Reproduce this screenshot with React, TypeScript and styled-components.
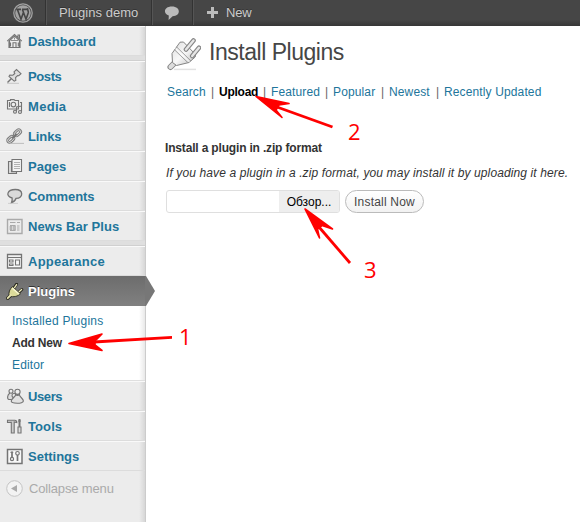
import React from 'react';
import styled, { createGlobalStyle } from 'styled-components';

const Global = createGlobalStyle`
  * { box-sizing: border-box; }
  body { margin: 0; background: #fff; font-family: "Liberation Sans", Arial, sans-serif; overflow: hidden; }
`;

const Page = styled.div`
  position: relative;
  width: 580px;
  height: 522px;
  overflow: hidden;
  display: flex;
  flex-direction: column;
`;

const AdminBar = styled.header`
  height: 26px;
  flex: none;
  display: flex;
  background: linear-gradient(#464646 0 20px, #373737 26px);
  color: #ccc;
`;

const BarItem = styled.div<{ $w: number; $pad: number; $last?: boolean }>`
  width: ${p => p.$w}px;
  height: 25px;
  padding-left: ${p => p.$pad}px;
  display: flex;
  align-items: center;
  gap: 8px;
  white-space: nowrap;
  border-right: ${p => (p.$last ? 0 : 1)}px solid #333;
  box-shadow: ${p => (p.$last ? 'none' : '1px 0 0 #555')};
`;

const BarText = styled.span<{ $ls: number }>`
  font-size: 13px;
  line-height: 26px;
  letter-spacing: ${p => p.$ls}px;
  text-shadow: 0 -1px 0 #333;
`;

const Columns = styled.div`
  flex: 1;
  display: flex;
`;

const Sidebar = styled.nav`
  width: 146px;
  flex: none;
  background: linear-gradient(to right, transparent 139px, rgba(0, 0, 0, 0.09) 145px), #ececec;
  border-right: 1px solid #ccc;
`;

const MenuRow = styled.a<{ $active?: boolean }>`
  position: relative;
  height: 30px;
  display: flex;
  align-items: center;
  padding-left: 6px;
  border-top: 1px solid ${p => (p.$active ? '#6d6d6d' : '#f9f9f9')};
  border-bottom: 1px solid ${p => (p.$active ? '#808080' : '#dcdcdc')};
  background: ${p => (p.$active ? 'linear-gradient(#6d6d6d, #808080)' : 'transparent')};
  color: ${p => (p.$active ? '#fff' : '#21759b')};
  text-shadow: ${p => (p.$active ? '0 -1px 0 #333' : 'none')};
`;

const MenuText = styled.span<{ $ls?: number }>`
  font-size: 13px;
  font-weight: bold;
  letter-spacing: ${p => p.$ls ?? 0}px;
  white-space: nowrap;
  padding-left: 4px;
`;

const ActivePointer = styled.svg`
  position: absolute;
  left: 145px;
  top: -1px;
`;

const Separator = styled.div`
  height: 5px;
  background: #dfdfdf;
  border-bottom: 1px solid #d0d0d0;
`;

const Submenu = styled.div`
  height: 75px;
  padding: 4px 0 0 12px;
  border-bottom: 1px solid #dfdfdf;
  background: linear-gradient(to right, transparent 139px, rgba(0, 0, 0, 0.09) 145px), #fff;
`;

const SubItem = styled.a<{ $current?: boolean; $ls?: number }>`
  display: block;
  font-size: 12px;
  line-height: 22px;
  letter-spacing: ${p => p.$ls ?? 0}px;
  font-weight: ${p => (p.$current ? 'bold' : 'normal')};
  color: ${p => (p.$current ? '#333' : '#21759b')};
`;

const Collapse = styled.div`
  height: 34px;
  display: flex;
  align-items: center;
  gap: 6px;
  padding-left: 6px;
  color: #aaa;
  font-size: 13px;
  letter-spacing: -0.15px;
`;

const Main = styled.main`
  flex: 1;
  padding-left: 19px;
  color: #333;
`;

const TitleRow = styled.div`
  display: flex;
  align-items: center;
  height: 55px;
  gap: 7px;
`;

const Title = styled.h1`
  margin: -3px 0 0 1px;
  font-size: 23px;
  font-weight: normal;
  color: #464646;
  letter-spacing: -0.47px;
`;

const Filters = styled.div`
  display: flex;
  padding-left: 2px;
  height: 22px;
  font-size: 12px;
  line-height: 22px;
  white-space: pre;
`;

const FilterLink = styled.a<{ $current?: boolean; $w: number }>`
  width: ${p => p.$w}px;
  color: ${p => (p.$current ? '#000' : '#21759b')};
  font-weight: ${p => (p.$current ? 'bold' : 'normal')};
  letter-spacing: ${p => (p.$current ? -0.25 : 0.13)}px;
`;

const Bar = styled.span`
  width: 13px;
  text-align: center;
  color: #666;
`;

const Heading = styled.h4`
  margin: 36px 0 0;
  height: 18px;
  line-height: 18px;
  font-size: 12px;
  letter-spacing: -0.17px;
`;

const Hint = styled.p`
  margin: 7px 0 0 1px;
  height: 18px;
  line-height: 18px;
  font-size: 12px;
  font-style: italic;
  letter-spacing: 0.118px;
  white-space: nowrap;
`;

const FormRow = styled.div`
  display: flex;
  gap: 5px;
  margin: 8px 0 0 1px;
`;

const FileField = styled.div`
  width: 174px;
  height: 23px;
  display: flex;
  justify-content: flex-end;
  border: 1px solid #dfdfdf;
  border-radius: 3px;
  overflow: hidden;
`;

const Browse = styled.span`
  width: 60px;
  background: #eee;
  color: #000;
  font-size: 12px;
  line-height: 22px;
  text-align: center;
`;

const InstallButton = styled.button`
  width: 79px;
  height: 23px;
  padding: 0;
  border: 1px solid #bbb;
  border-radius: 12px;
  background: linear-gradient(#fff, #f2f2f2);
  color: #464646;
  font: 12px "Liberation Sans", Arial, sans-serif;
  letter-spacing: 0.2px;
`;

const Annotations = styled.svg`
  position: absolute;
  left: 0;
  top: 0;
`;

const WpLogo = () => (
  <svg width="20" height="20" viewBox="0 0 20 20">
    <circle cx="10" cy="10" r="9.2" fill="none" stroke="#a2a2a2" strokeWidth="1.3" />
    <circle cx="10" cy="10" r="7.8" fill="#a2a2a2" />
    <path d="M3.2 6.4H8M9 6.4h5M4.4 6.5 8 16.2 10.4 9.4M9.4 6.5 13 16.2 15.2 10C15.8 8 14.2 7 14.6 5.2" fill="none" stroke="#454545" strokeWidth="1.6" />
  </svg>
);

type IconName = 'home' | 'pin' | 'media' | 'link' | 'pages' | 'comment' | 'news' | 'appearance' | 'plug' | 'users' | 'tools' | 'settings';

const shapes: Record<IconName, React.ReactNode> = {
  home: <><path d="M3 8v6.5h11V8L8.5 3z" fill="#eee" /><path d="M1.2 8.2 8.5 1.6l7.3 6.6M3.5 8v6.5h10V8M12 4.5V2h1.5v3.5M7 14.5V9.8h3v4.7M4.5 9.5v4M12.3 9.5v4" /><path d="M5 7.5h7M8.5 4.5v2" strokeWidth=".8" /></>,
  pin: <><path d="M1.5 14.5 6 10" strokeWidth="1.4" /><path d="M8 3.8 10.5 1.5l4.5 4.2-2.2 2-1.2-.2-2 2 .2 3-1.6.7L3 8.3l.8-1.2 3 .1 2-1.7z" fill="#ddd" /><path d="M1 15.3h12" stroke="#bbb" strokeWidth=".8" /></>,
  media: <><path d="M1.5 2.5v8.5h11V2.5H9L8 1.6H4.5v.9z" fill="#eee" /><circle cx="7.4" cy="6.6" r="2.3" /><path d="M3.5 4v5M14 4.5h1.5v9M10.5 13V9l5-1" /><circle cx="9" cy="13.7" r="1.5" fill="#ddd" /><circle cx="14" cy="14" r="1.5" fill="#ddd" /></>,
  link: <><g strokeWidth="2.8" stroke="#808080"><rect x="8" y="2.7" width="7" height="4" rx="2" transform="rotate(-42 11.6 4.7)" /><rect x="1.2" y="9.3" width="7" height="4" rx="2" transform="rotate(-42 4.8 11.3)" /></g><g strokeWidth=".9" stroke="#ddd"><rect x="8" y="2.7" width="7" height="4" rx="2" transform="rotate(-42 11.6 4.7)" /><rect x="1.2" y="9.3" width="7" height="4" rx="2" transform="rotate(-42 4.8 11.3)" /></g><path d="m6 10.2 4.7-4.2" strokeWidth="2" /><path d="M4 15.4h14" stroke="#b8b8b8" strokeWidth=".9" /></>,
  pages: <><path d="M2.5 3.5h3v10.2h5v1.8h-8z" fill="#ddd" /><path d="M6 1.5h9.5v12H6z" fill="#f4f4f4" /><path d="M8 4.5h6M8 6.5h6M8 8.5h6M8 10.5h6" strokeWidth=".9" stroke="#aaa" /></>,
  comment: <><path d="M9.3 1.5c8.4 0 8.4 8.8.8 8.8-.6 2-2 3.5-4.7 4.5 1-1.8 1-3 .7-4.8C-.8 8.3 1 1.5 9.3 1.5z" fill="#dadada" strokeWidth="1.3" /><path d="M2 15.4h10" stroke="#ccc" strokeWidth=".9" /></>,
  news: <g stroke="#aaa"><path d="M1.5 1.5h14.5v14H1.5z" fill="#ececec" strokeWidth="1.4" /><path d="M4 4.5h5.5M11 4.5h3M11 8h2.5M11 10h2.5M11 12h2.5M4 7.5h5.5M4 12.5h5.5" /><path d="M4 8h2v4H4zM7.5 8h2v4h-2z" fill="#bbb" strokeWidth=".6" /></g>,
  appearance: <><path d="M1.5 1.5h14v13.5h-14z" fill="#f8f8f8" strokeWidth="1.3" /><path d="M2 4.5h13" /><path d="M9.5 7h4v5h-4zM3.5 7h3.5v2H3.5zM3.5 11h3.5v1.5H3.5z" /></>,
  plug: <g stroke="#2b2b22"><path d="m8 4.8 2.6-3.6M12.8 9.3l3-2.8" strokeWidth="3" strokeLinecap="round" /><path d="m8.4 4.8 2.2-3.2M12.8 9l2.8-2.5" stroke="#f0edbd" strokeWidth="1.3" strokeLinecap="round" /><path d="M1.7 15.2 4.5 12.5" strokeWidth="3.4" strokeLinecap="round" /><path d="M3.2 13.2C2.3 9.5 3.6 6.3 6.4 3.6l8 7.2c-2.6 2.6-6.6 3.6-11.2 2.4z" fill="#dcdb99" strokeWidth=".9" /><path d="m6.4 5.2 6.5 5.8" stroke="#f8f6d0" strokeWidth="1.6" /><path d="M1.7 15.2 4.8 12" stroke="#e8e5b0" strokeWidth="1.8" strokeLinecap="round" /></g>,
  users: <><circle cx="5" cy="3.2" r="2" fill="#eee" /><path d="M4 5C1 7 1 11.2 3 11.5h4" fill="#ddd" /><circle cx="11.5" cy="3.8" r="2.6" fill="#eee" /><circle cx="8" cy="7.5" r="2" fill="#eee" /><path d="M9.6 6.5c.2 2.4-4.4 4-4.4 6.5 0 3 12.2 3 12.2 0 0-2.5-4-4-4-6.5-1 1-2.8 1-3.8 0z" fill="#e2e2e2" /></>,
  tools: <><path d="M1.5 4.5V2.3h7.3c1.3 0 2 .8 2 2.2L8.2 4v11H5.3V4.3z" fill="#ccc" /><path d="M13.5 1v8" strokeWidth="2" /><path d="M12 3h3M12 9h3v6h-3z" fill="#ddd" /></>,
  settings: <><path d="M1.5 1.5H16v14H1.5z" fill="#f8f8f8" strokeWidth="1.5" /><path d="M6 3.5v6M11.5 7v6" strokeWidth="1.7" /><circle cx="6" cy="11" r="1.6" strokeWidth="1.2" /><circle cx="11.5" cy="5.3" r="1.8" strokeWidth="1.2" /><path d="M4.3 4.3h3" strokeWidth=".9" /></>,
};

const MenuIcon = ({ name }: { name: IconName }) => (
  <svg width="18" height="17" viewBox="0 0 18 17" fill="none" stroke="#747474" strokeWidth="1.1">
    {shapes[name]}
  </svg>
);

const Item = ({ name, label, ls, active }: { name: IconName; label: string; ls?: number; active?: boolean }) => (
  <MenuRow $active={active}>
    <MenuIcon name={name} />
    <MenuText $ls={ls}>{label}</MenuText>
    {active && (
      <ActivePointer width="10" height="30">
        <path d="M0 0h1l9 15-9 15H0z" fill="#777" />
      </ActivePointer>
    )}
  </MenuRow>
);

const LargePlug = () => (
  <svg width="36" height="36" viewBox="0 0 36 36" fill="none" stroke="#858585">
    <defs>
      <linearGradient id="metal" x1="0" y1="0" x2="1" y2="1">
        <stop offset="0" stopColor="#ddd" />
        <stop offset=".5" stopColor="#f8f8f8" />
        <stop offset="1" stopColor="#bbb" />
      </linearGradient>
    </defs>
    <path d="M9 33.4h22" stroke="#e2e2e2" strokeWidth="1.5" />
    <path d="M5.5 31 9 27.5" strokeWidth="6" strokeLinecap="round" />
    <path d="M5.5 31 9 27.5" stroke="#ddd" strokeWidth="4" strokeLinecap="round" />
    <path d="M7.5 26.5 7 17.5 15 6.2 18.5 6 30.5 18.5 30.2 21 24 26.5 11.5 29.5z" fill="url(#metal)" strokeLinejoin="round" />
    <path d="M11.5 10.8 26 25M9.5 13.8l13.5 13" stroke="#999" strokeWidth=".9" />
    <path d="M10.5 12.4 24.6 26" stroke="#fff" />
    <path d="m21 13.5 7.5-9M27.2 20l6.8-8.2" strokeWidth="4.6" strokeLinecap="round" />
    <path d="m21 13.5 7.5-9M27.2 20l6.8-8.2" stroke="#e6e6e6" strokeWidth="2.4" strokeLinecap="round" />
  </svg>
);

export default function App() {
  return (
    <Page>
      <Global />
      <AdminBar>
        <BarItem $w={46} $pad={13}><WpLogo /></BarItem>
        <BarItem $w={106} $pad={13}><BarText $ls={0.05}>Plugins demo</BarText></BarItem>
        <BarItem $w={41} $pad={12}>
          <svg width="16" height="14" viewBox="0 0 16 14"><path d="M8 .6c9 0 9 9.4 .6 9.6L4.6 14l.2-4.4C-1 8-.5.6 8 .6z" fill="#bbb" /></svg>
        </BarItem>
        <BarItem $w={387} $pad={14} $last>
          <svg width="11" height="11"><path d="M5.5 0v11M0 5.5h11" stroke="#bbb" strokeWidth="3" /></svg>
          <BarText $ls={-0.2}>New</BarText>
        </BarItem>
      </AdminBar>
      <Columns>
        <Sidebar>
          <Item name="home" label="Dashboard" />
          <Separator />
          <Item name="pin" label="Posts" ls={-0.4} />
          <Item name="media" label="Media" ls={0.3} />
          <Item name="link" label="Links" ls={-0.1} />
          <Item name="pages" label="Pages" />
          <Item name="comment" label="Comments" ls={-0.1} />
          <Item name="news" label="News Bar Plus" ls={0.08} />
          <Separator />
          <Item name="appearance" label="Appearance" ls={0.25} />
          <Item name="plug" label="Plugins" active />
          <Submenu>
            <SubItem $ls={0.24}>Installed Plugins</SubItem>
            <SubItem $current $ls={-0.2}>Add New</SubItem>
            <SubItem $ls={0.15}>Editor</SubItem>
          </Submenu>
          <Item name="users" label="Users" ls={-0.4} />
          <Item name="tools" label="Tools" ls={0.1} />
          <Item name="settings" label="Settings" />
          <Collapse>
            <svg width="17" height="17"><circle cx="8.5" cy="8.5" r="7.8" fill="#f3f3f3" stroke="#c4c4c4" /><path d="M5 8.5 11 5v7z" fill="#aaa" /></svg>
            Collapse menu
          </Collapse>
        </Sidebar>
        <Main>
          <TitleRow>
            <LargePlug />
            <Title>Install Plugins</Title>
          </TitleRow>
          <Filters>
            <FilterLink $w={39}>Search</FilterLink><Bar>|</Bar>
            <FilterLink $w={39} $current>Upload</FilterLink><Bar>|</Bar>
            <FilterLink $w={49}>Featured</FilterLink><Bar>|</Bar>
            <FilterLink $w={43}>Popular</FilterLink><Bar>|</Bar>
            <FilterLink $w={42}>Newest</FilterLink><Bar>|</Bar>
            <FilterLink $w={98}>Recently Updated</FilterLink>
          </Filters>
          <Heading>Install a plugin in .zip format</Heading>
          <Hint>If you have a plugin in a .zip format, you may install it by uploading it here.</Hint>
          <FormRow>
            <FileField><Browse>Обзор...</Browse></FileField>
            <InstallButton>Install Now</InstallButton>
          </FormRow>
        </Main>
      </Columns>
      <Annotations width="580" height="522" fill="#f00" fontFamily="Open Sans, Noto Sans, sans-serif" fontSize="22">
        <g stroke="#f00" strokeWidth="1.6" strokeLinejoin="round" strokeLinecap="round">
          <path d="m69 343.5 33-9.5-7 7v4l7 5.5z" />
          <path d="m256 96.5 33 7-10 1.5-3 5 6 7.5z" />
          <path d="m305 209 27.5 20-10.5-3.5-4.5 3.5 2 9z" />
        </g>
        <g stroke="#f00" strokeWidth="2.8">
          <path d="m94 342 78-4.7" />
          <path d="m277 107 55.500 20" />
          <path d="m319 227 31 36" />
        </g>
        <text x="179" y="345">1</text>
        <text x="348" y="140">2</text>
        <text x="364" y="278">3</text>
      </Annotations>
    </Page>
  );
}
